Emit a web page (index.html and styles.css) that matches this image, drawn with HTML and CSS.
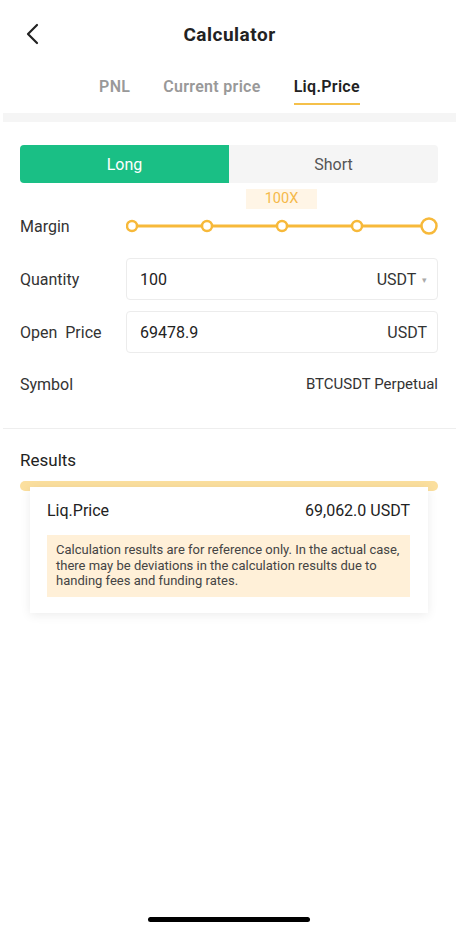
FILE: index.html
```html
<!DOCTYPE html>
<html lang="en">
<head>
    <meta charset="UTF-8">
    <meta name="viewport" content="width=device-width, initial-scale=1.0">
    <title>Calculator</title>
    <link rel="stylesheet" href="styles.css">
</head>
<body>
    <div class="header">
        <span class="back">
            <svg width="16" height="22" viewBox="0 0 16 22"><path d="M12 2 L3 11 L12 20" fill="none" stroke="#222" stroke-width="2.2" stroke-linecap="round" stroke-linejoin="round"/></svg>
        </span>
        <h1>Calculator</h1>
    </div>

    <div class="tabs">
        <span class="tab">PNL</span>
        <span class="tab">Current price</span>
        <span class="tab active">Liq.Price</span>
    </div>
    <div class="band"></div>

    <div class="content">
        <div class="switch">
            <div class="side long">Long</div>
            <div class="side short">Short</div>
        </div>

        <div class="badge-row">
            <span class="badge">100X</span>
        </div>

        <div class="row margin-row">
            <span class="label">Margin</span>
            <svg class="slider" width="312" height="20" viewBox="0 0 312 20">
                <line x1="6" y1="10" x2="303" y2="10" stroke="#f7b93a" stroke-width="3"/>
                <circle cx="6" cy="10" r="5" fill="#fff" stroke="#f7b93a" stroke-width="2.5"/>
                <circle cx="81" cy="10" r="5" fill="#fff" stroke="#f7b93a" stroke-width="2.5"/>
                <circle cx="156" cy="10" r="5" fill="#fff" stroke="#f7b93a" stroke-width="2.5"/>
                <circle cx="231" cy="10" r="5" fill="#fff" stroke="#f7b93a" stroke-width="2.5"/>
                <circle cx="303" cy="10" r="7.5" fill="#fff" stroke="#f7b93a" stroke-width="2.5"/>
            </svg>
        </div>

        <div class="row field-row">
            <span class="label">Quantity</span>
            <div class="field">
                <span class="value">100</span>
                <span class="unit">USDT <span class="caret">&#9662;</span></span>
            </div>
        </div>

        <div class="row field-row">
            <span class="label">Open&nbsp; Price</span>
            <div class="field">
                <span class="value">69478.9</span>
                <span class="unit">USDT</span>
            </div>
        </div>

        <div class="row symbol-row">
            <span class="label">Symbol</span>
            <span class="symbol">BTCUSDT Perpetual</span>
        </div>
    </div>

    <div class="divider"></div>

    <div class="content">
        <h2>Results</h2>
        <div class="result-bar"></div>
        <div class="card">
            <div class="card-row">
                <span>Liq.Price</span>
                <span>69,062.0 USDT</span>
            </div>
            <p class="notice">Calculation results are for reference only. In the actual case, there may be deviations in the calculation results due to handing fees and funding rates.</p>
        </div>
    </div>

    <div class="home-indicator"></div>
</body>
</html>
```

FILE: styles.css
```css
body {
    margin: 0;
    width: 459px;
    height: 932px;
    position: relative;
    font-family: Roboto, "Noto Sans", sans-serif;
    background: #fff;
    color: #222;
}
.header {
    height: 68px;
    display: flex;
    align-items: center;
    justify-content: center;
    position: relative;
}
.back {
    position: absolute;
    left: 25px;
    top: 23px;
}
h1 {
    margin: 0;
    font-size: 19px;
    font-weight: 700;
    letter-spacing: 0.5px;
    color: #222;
}
.tabs {
    display: flex;
    justify-content: center;
    gap: 33px;
    height: 45px;
}
.tab {
    font-size: 16px;
    font-weight: 600;
    letter-spacing: 0.3px;
    color: #999;
    padding-top: 9px;
    height: 27px;
    box-sizing: content-box;
}
.tab.active {
    color: #222;
    border-bottom: 2.5px solid #f5c04a;
    height: 26px;
}
.band {
    height: 9px;
    margin: 0 3px;
    background: #f5f5f5;
}
.content {
    padding: 0 21px 0 20px;
}
.switch {
    display: flex;
    margin-top: 23px;
    height: 38px;
    border-radius: 4px;
    overflow: hidden;
}
.side {
    flex: 1;
    display: flex;
    align-items: center;
    justify-content: center;
    font-size: 16px;
}
.long {
    background: #1abf85;
    color: #fff;
}
.short {
    background: #f5f5f5;
    color: #555;
}
.badge-row {
    height: 20px;
    margin-top: 5px;
    padding-left: 226px;
}
.badge {
    display: inline-block;
    width: 71px;
    height: 20px;
    line-height: 20px;
    text-align: center;
    background: #fff5e6;
    color: #f5b94a;
    font-size: 14.5px;
}
.row {
    display: flex;
    align-items: center;
    justify-content: space-between;
}
.label {
    font-size: 16px;
    color: #333;
}
.margin-row {
    height: 20px;
    margin-top: 8px;
}
.field-row {
    height: 42px;
    margin-top: 11px;
}
.margin-row + .field-row {
    margin-top: 22px;
}
.field {
    width: 312px;
    height: 42px;
    box-sizing: border-box;
    border: 1px solid #ececec;
    border-radius: 4px;
    display: flex;
    align-items: center;
    justify-content: space-between;
    padding: 0 10px 0 13px;
}
.value {
    font-size: 16px;
    color: #222;
}
.unit {
    font-size: 16px;
    color: #333;
}
.caret {
    font-size: 9px;
    color: #aaa;
    margin-left: 2px;
    vertical-align: 2px;
}
.symbol-row {
    height: 20px;
    margin-top: 21px;
}
.symbol {
    font-size: 15px;
    color: #333;
}
.divider {
    height: 1px;
    background: #eee;
    margin: 34px 3px 0;
}
h2 {
    margin: 21px 0 0;
    font-size: 17px;
    font-weight: 400;
    color: #222;
    line-height: 20px;
}
.result-bar {
    height: 10px;
    margin-top: 11px;
    border-radius: 5px;
    background: #fbdf9e;
}
.card {
    position: relative;
    margin: -4px 10px 0;
    background: #fff;
    box-shadow: 0 2px 10px rgba(0, 0, 0, 0.08);
    padding: 14px 18px 16px 17px;
}
.card-row {
    display: flex;
    justify-content: space-between;
    font-size: 16px;
    color: #222;
    line-height: 20px;
}
.notice {
    margin: 14px 0 0;
    background: #fff0d8;
    padding: 7px 9px 8px;
    font-size: 13px;
    line-height: 15.5px;
    color: #444;
}
.home-indicator {
    position: absolute;
    left: 148px;
    top: 917px;
    width: 162px;
    height: 5px;
    border-radius: 3px;
    background: #000;
}
```
